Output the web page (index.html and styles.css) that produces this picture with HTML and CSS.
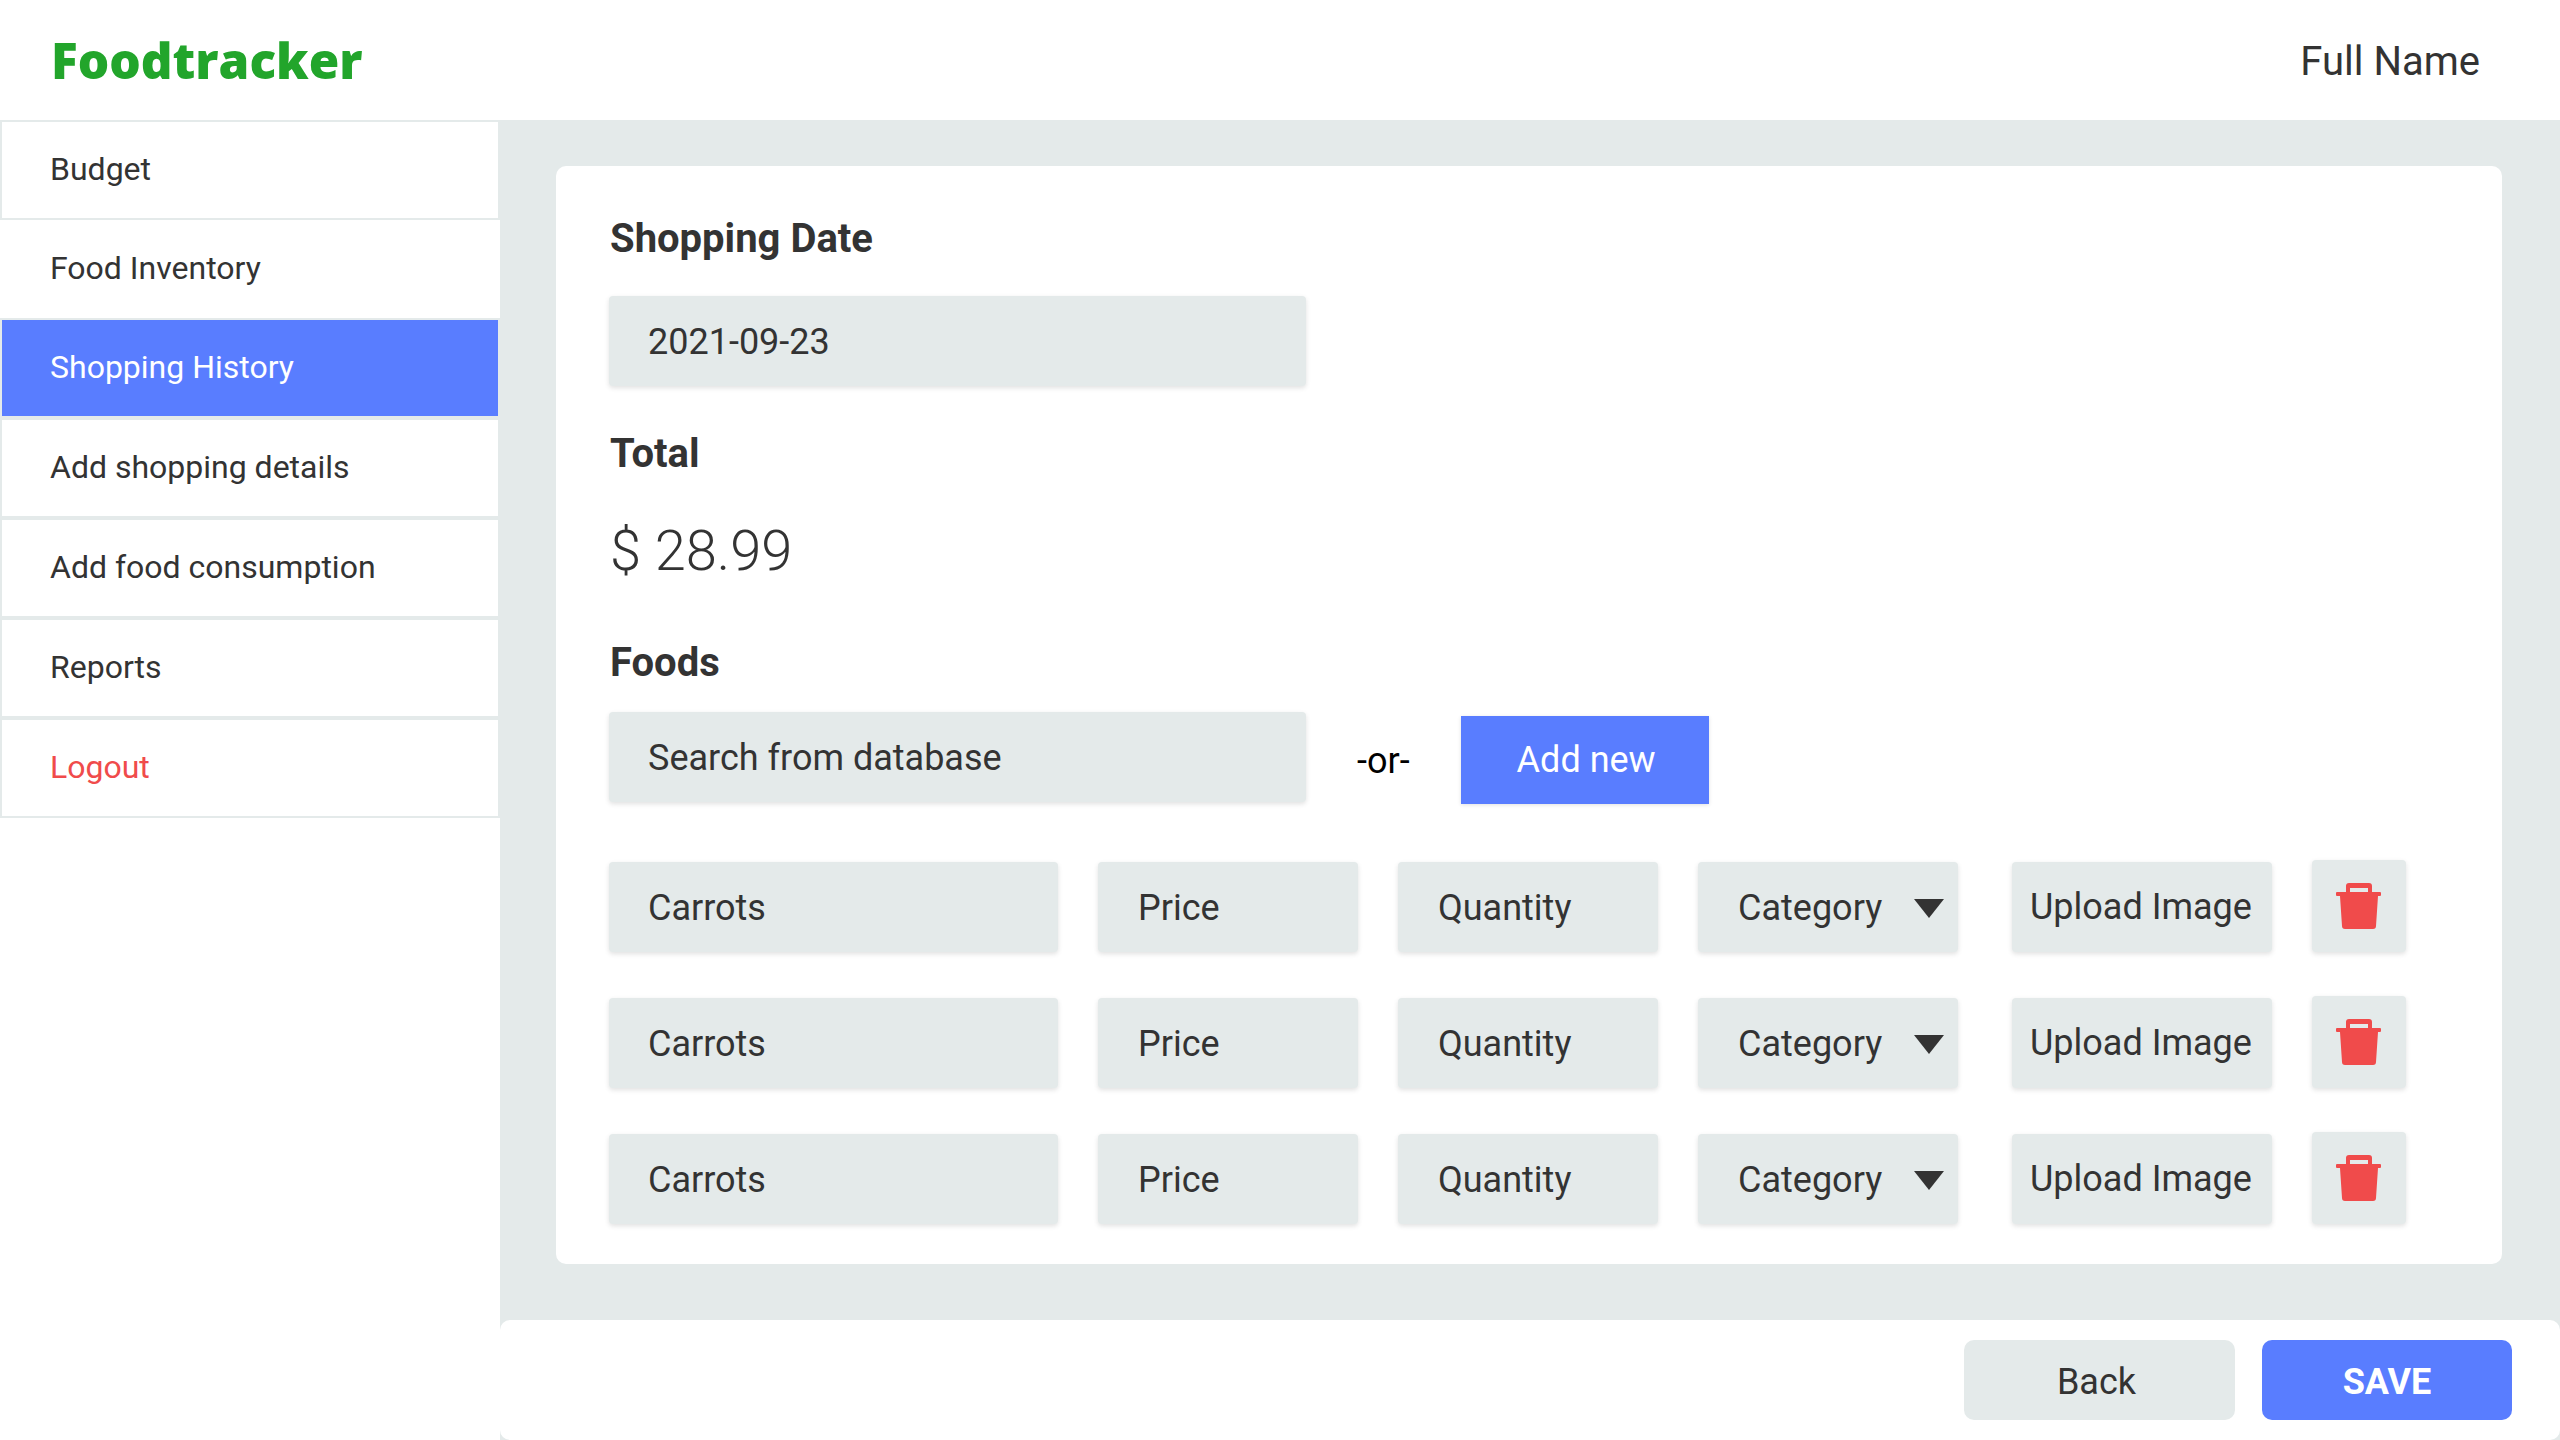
FILE: index.html
```html
<!doctype html>
<html lang="en">
    <head>
        <meta charset="UTF-8" />
        <meta name="viewport" content="width=device-width, initial-scale=1.0" />
        <title>Foodtracker</title>
        <link rel="stylesheet" href="styles.css">
    </head>
    <body>
        <header class="topbar">
            <div class="logo">Foodtracker</div>
            <div class="user-name">Full Name</div>
        </header>

        <div class="layout">
            <nav class="sidebar">
                <a class="nav-item">Budget</a>
                <a class="nav-item nav-plain">Food Inventory</a>
                <a class="nav-item nav-active">Shopping History</a>
                <a class="nav-item">Add shopping details</a>
                <a class="nav-item">Add food consumption</a>
                <a class="nav-item">Reports</a>
                <a class="nav-item nav-logout">Logout</a>
            </nav>

            <main class="content">
                <section class="card">
                    <h2 class="date-title">Shopping Date</h2>
                    <div class="field field-wide">2021-09-23</div>

                    <h2 class="total-title">Total</h2>
                    <div class="total-value">$ 28.99</div>

                    <h2 class="foods-title">Foods</h2>
                    <div class="search-row">
                        <div class="field field-wide">Search from database</div>
                        <span class="or-text">-or-</span>
                        <button class="add-new" type="button">Add new</button>
                    </div>

                    <div class="food-row">
                        <div class="field field-name">Carrots</div>
                        <div class="field field-small">Price</div>
                        <div class="field field-small">Quantity</div>
                        <div class="field field-small field-select">Category<span class="caret"></span></div>
                        <div class="field field-small field-upload">Upload Image</div>
                        <div class="field field-delete">
                            <svg class="trash" viewBox="0 0 45 46"><path d="M10 9V3a3 3 0 0 1 3-3h20a3 3 0 0 1 3 3v6h8a1 1 0 0 1 1 1v2a1 1 0 0 1-1 1h-2l-2 30a3 3 0 0 1-3 3H9a3 3 0 0 1-3-3L4 13H1a1 1 0 0 1-1-1v-2a1 1 0 0 1 1-1zM14 5v4h18V5z"/></svg>
                        </div>
                    </div>
                    <div class="food-row">
                        <div class="field field-name">Carrots</div>
                        <div class="field field-small">Price</div>
                        <div class="field field-small">Quantity</div>
                        <div class="field field-small field-select">Category<span class="caret"></span></div>
                        <div class="field field-small field-upload">Upload Image</div>
                        <div class="field field-delete">
                            <svg class="trash" viewBox="0 0 45 46"><path d="M10 9V3a3 3 0 0 1 3-3h20a3 3 0 0 1 3 3v6h8a1 1 0 0 1 1 1v2a1 1 0 0 1-1 1h-2l-2 30a3 3 0 0 1-3 3H9a3 3 0 0 1-3-3L4 13H1a1 1 0 0 1-1-1v-2a1 1 0 0 1 1-1zM14 5v4h18V5z"/></svg>
                        </div>
                    </div>
                    <div class="food-row">
                        <div class="field field-name">Carrots</div>
                        <div class="field field-small">Price</div>
                        <div class="field field-small">Quantity</div>
                        <div class="field field-small field-select">Category<span class="caret"></span></div>
                        <div class="field field-small field-upload">Upload Image</div>
                        <div class="field field-delete">
                            <svg class="trash" viewBox="0 0 45 46"><path d="M10 9V3a3 3 0 0 1 3-3h20a3 3 0 0 1 3 3v6h8a1 1 0 0 1 1 1v2a1 1 0 0 1-1 1h-2l-2 30a3 3 0 0 1-3 3H9a3 3 0 0 1-3-3L4 13H1a1 1 0 0 1-1-1v-2a1 1 0 0 1 1-1zM14 5v4h18V5z"/></svg>
                        </div>
                    </div>
                </section>

                <footer class="actions">
                    <button class="btn btn-back" type="button">Back</button>
                    <button class="btn btn-save" type="button">SAVE</button>
                </footer>
            </main>
        </div>
    </body>
</html>
```

FILE: styles.css
```css
* {
    box-sizing: border-box;
    margin: 0;
    padding: 0;
}

body {
    font-family: Roboto, "Liberation Sans", sans-serif;
    color: #333;
    background-color: #fff;
    height: 1440px;
    overflow: hidden;
    display: flex;
    flex-direction: column;
}

.topbar {
    height: 120px;
    display: flex;
    justify-content: space-between;
    align-items: center;
    padding: 0 80px 0 51px;
}

.logo {
    font-family: "Open Sans", sans-serif;
    font-size: 49.500px;
    font-weight: 800;
    color: #22a52b;
}

.user-name {
    font-size: 40px;
    padding-top: 2px;
}

.layout {
    flex: 1;
    display: flex;
    min-height: 0;
}

.sidebar {
    width: 500px;
    display: flex;
    flex-direction: column;
}

.nav-item {
    height: 100px;
    flex-shrink: 0;
    display: flex;
    align-items: center;
    padding: 0 0 2px 48px;
    font-size: 32px;
    border: 2px solid #e4eaea;
}

.nav-plain {
    height: 98px;
    border: none;
    padding-left: 50px;
}

.nav-active {
    background-color: #597dff;
    color: #fff;
}

.nav-logout {
    color: #f04b4b;
}

.content {
    flex: 1;
    background-color: #e4eaea;
    display: flex;
    flex-direction: column;
    padding-top: 46px;
}

.card {
    width: 1946px;
    height: 1098px;
    margin-left: 56px;
    padding: 49px 53px 0;
    background-color: #fff;
    border-radius: 10px;
}

h2 {
    font-size: 40px;
    font-weight: 700;
    line-height: 48px;
    padding-left: 1px;
}

.field {
    height: 90px;
    display: flex;
    align-items: center;
    padding: 2px 0 0 39px;
    font-size: 36px;
    background-color: #e4eaea;
    border-radius: 4px;
    box-shadow: 0 2px 5px rgba(0, 0, 0, 0.12);
}

.date-title {
    margin-bottom: 33px;
}

.field-wide {
    width: 697px;
}

.total-title {
    margin-top: 44px;
}

.total-value {
    font-size: 56px;
    font-weight: 300;
    line-height: 66px;
    margin-top: 40px;
    padding-left: 1px;
}

.foods-title {
    margin-top: 55px;
}

.search-row {
    display: flex;
    align-items: flex-start;
    margin-top: 25px;
}

.or-text {
    font-size: 36px;
    color: #000;
    margin: 28px 0 0 51px;
}

.add-new {
    width: 248px;
    height: 88px;
    margin: 4px 0 0 51px;
    padding-left: 3px;
    font-family: inherit;
    font-size: 36px;
    color: #fff;
    background-color: #597dff;
    border: none;
    box-shadow: 0 1px 4px rgba(0, 0, 0, 0.12);
}

.food-row {
    display: flex;
    align-items: flex-end;
    gap: 40px;
    margin-top: 44px;
}

.search-row + .food-row {
    margin-top: 56px;
}

.field-name {
    width: 449px;
    flex-shrink: 0;
}

.field-small {
    width: 260px;
    flex-shrink: 0;
    padding-left: 40px;
}

.field-select {
    justify-content: space-between;
    padding-right: 14px;
}

.caret {
    width: 0;
    height: 0;
    border-left: 15px solid transparent;
    border-right: 15px solid transparent;
    border-top: 19px solid #333;
}

.field-upload {
    margin-left: 14px;
    padding: 0 0 0 18px;
    white-space: nowrap;
}

.field-delete {
    width: 94px;
    height: 92px;
    padding: 0 2px 0 0;
    justify-content: center;
}

.trash {
    width: 45px;
    height: 46px;
    fill: #f04b4b;
    fill-rule: evenodd;
}

.actions {
    height: 120px;
    margin-top: 56px;
    padding-right: 48px;
    display: flex;
    justify-content: flex-end;
    align-items: center;
    gap: 27px;
    background-color: #fff;
    border-radius: 10px;
}

.btn {
    height: 80px;
    padding-top: 3px;
    font-family: inherit;
    font-size: 36px;
    border: none;
    border-radius: 10px;
}

.btn-back {
    width: 271px;
    padding-right: 6px;
    color: #333;
    background-color: #e4eaea;
}

.btn-save {
    width: 250px;
    font-weight: 700;
    color: #fff;
    background-color: #597dff;
}
```
